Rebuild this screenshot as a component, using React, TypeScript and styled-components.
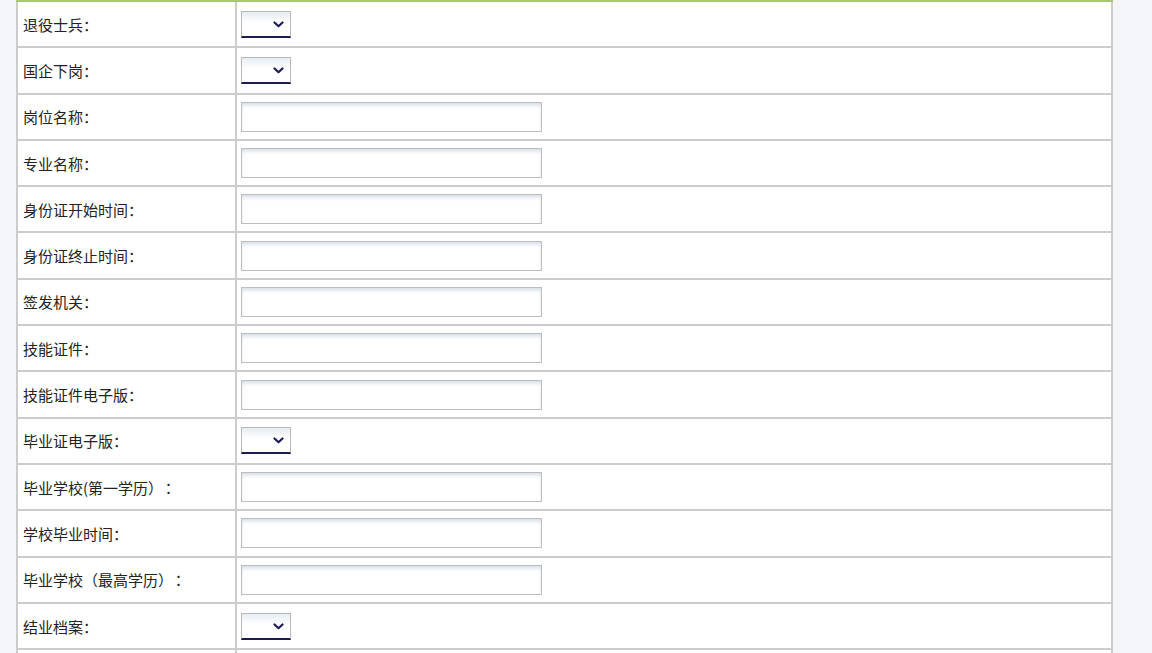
import React from "react";
import styled, { createGlobalStyle } from "styled-components";

const Global = createGlobalStyle`
  html, body { margin: 0; padding: 0; }
  body {
    background: #f4f5f8;
    font-family: "Microsoft YaHei", "Noto Sans CJK SC", "Noto Sans", sans-serif;
    overflow: hidden;
  }
`;

const Page = styled.div`
  width: 1097px;
  margin-left: 16px;
  border-top: 2px solid #a8c96a;
  box-sizing: border-box;
`;

const Table = styled.div`
  display: grid;
  grid-template-columns: 217px 874px;
  grid-auto-rows: 44.31px;
  gap: 2px;
  padding: 0 2px 2px 2px;
  background: #cccccc;
`;

const LabelCell = styled.div`
  background: #ffffff;
  display: flex;
  align-items: center;
  padding-left: 5px;
  font-size: 15px;
  color: #222;
  white-space: nowrap;
`;

const CenteredColon = styled.span`
  font-family: "Noto Sans CJK TC", "Noto Sans CJK SC", sans-serif;
  margin-left: -2px;
`;

const ValueCell = styled.div`
  background: #ffffff;
  display: flex;
  align-items: center;
  padding-left: 4px;
`;

const SelectWrap = styled.div`
  position: relative;
  width: 50px;
  height: 27px;
  box-sizing: border-box;
  border: 1px solid #b9b9b9;
  border-bottom: 2px solid #1b1b4d;
  background: linear-gradient(#e6edf3 0%, #ffffff 45%, #ffffff 100%);
`;

const NativeSelect = styled.select`
  appearance: none;
  -webkit-appearance: none;
  width: 100%;
  height: 100%;
  border: none;
  background: transparent;
  outline: none;
  font-size: 13px;
  padding: 0 4px;
`;

const Chevron = styled.svg`
  position: absolute;
  right: 6px;
  top: 9px;
  width: 11px;
  height: 7px;
  pointer-events: none;
`;

const TextInput = styled.input`
  width: 301px;
  height: 30px;
  box-sizing: border-box;
  border: 1px solid #bdbdbd;
  background: #fff;
  box-shadow: inset 0 3px 4px -1px #d0dae4;
  outline: none;
  font-size: 13px;
  padding: 0 4px;
`;

type Row = { label: string; kind: "select" | "input"; wideColon?: boolean };

const rows: Row[] = [
  { label: "退役士兵：", kind: "select" },
  { label: "国企下岗：", kind: "select" },
  { label: "岗位名称：", kind: "input" },
  { label: "专业名称：", kind: "input" },
  { label: "身份证开始时间：", kind: "input" },
  { label: "身份证终止时间：", kind: "input" },
  { label: "签发机关：", kind: "input" },
  { label: "技能证件：", kind: "input" },
  { label: "技能证件电子版：", kind: "input" },
  { label: "毕业证电子版：", kind: "select" },
  { label: "毕业学校(第一学历）", kind: "input", wideColon: true },
  { label: "学校毕业时间：", kind: "input" },
  { label: "毕业学校（最高学历）", kind: "input", wideColon: true },
  { label: "结业档案：", kind: "select" },
  { label: "", kind: "input" },
];

function Dropdown() {
  return (
    <SelectWrap>
      <NativeSelect defaultValue="">
        <option value=""></option>
        <option value="1">是</option>
        <option value="0">否</option>
      </NativeSelect>
      <Chevron viewBox="0 0 11 7">
        <path d="M1.5 1.5 L5.5 5.2 L9.5 1.5" fill="none" stroke="#1b1b55" strokeWidth="2.2" strokeLinecap="round" strokeLinejoin="round" />
      </Chevron>
    </SelectWrap>
  );
}

export default function App() {
  return (
    <>
      <Global />
      <Page>
        <Table>
          {rows.map((r, i) => (
            <React.Fragment key={i}>
              <LabelCell>
                {r.label}
                {r.wideColon && <CenteredColon>：</CenteredColon>}
              </LabelCell>
              <ValueCell>{r.kind === "select" ? <Dropdown /> : <TextInput type="text" />}</ValueCell>
            </React.Fragment>
          ))}
        </Table>
      </Page>
    </>
  );
}
